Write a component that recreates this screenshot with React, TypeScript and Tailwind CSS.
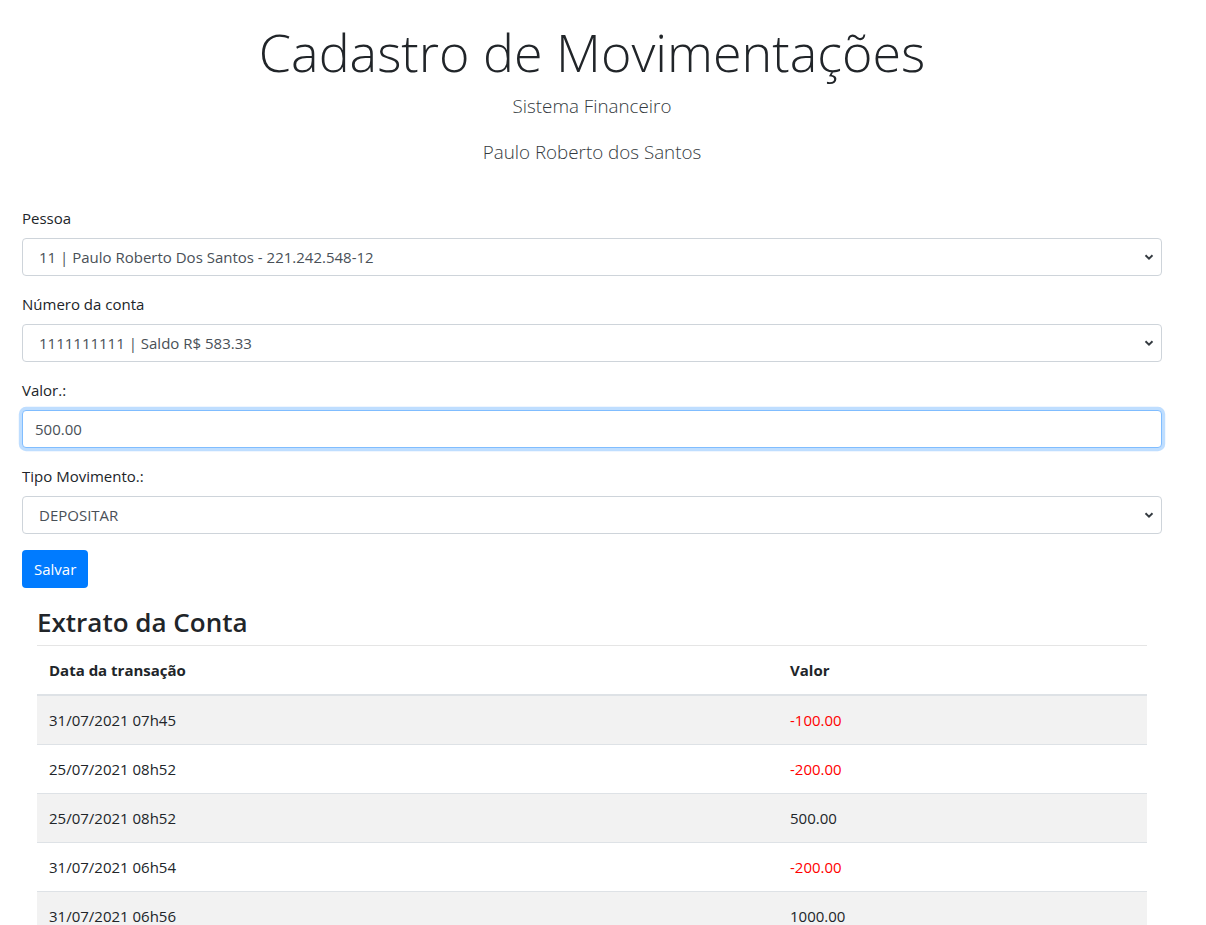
import React from "react";

const font = { fontFamily: '"Segoe UI", "Open Sans", "Noto Sans", sans-serif' };

const rows = [
  { date: "31/07/2021 07h45", value: "-100.00" },
  { date: "25/07/2021 08h52", value: "-200.00" },
  { date: "25/07/2021 08h52", value: "500.00" },
  { date: "31/07/2021 06h54", value: "-200.00" },
  { date: "31/07/2021 06h56", value: "1000.00" },
];

function Chevron() {
  return (
    <svg
      className="pointer-events-none absolute right-[8px] top-1/2 -translate-y-1/2"
      width="10"
      height="8"
      viewBox="0 0 10 8"
    >
      <path d="M1.5 2.2 L5 5.6 L8.5 2.2" stroke="#343a40" strokeWidth="1.9" fill="none" />
    </svg>
  );
}

function SelectField({ label, value }: { label: string; value: string }) {
  return (
    <div className="mb-4">
      <label className="mb-2 block text-[15px] leading-6 text-[#212529]">{label}</label>
      <div className="relative">
        <select
          defaultValue={value}
          className="h-[38px] w-full appearance-none rounded-[4px] border border-[#ced4da] bg-white pl-[16px] pr-7 text-[15px] text-[#495057] outline-none"
          style={font}
        >
          <option>{value}</option>
        </select>
        <Chevron />
      </div>
    </div>
  );
}

export default function App() {
  return (
    <div className="min-h-screen bg-white text-[#212529]" style={font}>
      <div className="ml-[22px] w-[1140px] pb-10">
        {/* Header */}
        <div className="pt-[18px] text-center">
          <h1 className="text-[52px] font-light leading-[67px] text-[#212529]">
            Cadastro de Movimentações
          </h1>
          <p className="mt-[6px] text-[18.8px] font-light leading-[30px] text-[#343a40]">Sistema Financeiro</p>
          <p className="mt-[16px] text-[18.8px] font-light leading-[30px] text-[#343a40]">Paulo Roberto dos Santos</p>
        </div>

        {/* Form */}
        <form className="mt-[39px]" onSubmit={(e) => e.preventDefault()}>
          <SelectField label="Pessoa" value="11 | Paulo Roberto Dos Santos - 221.242.548-12" />
          <SelectField label="Número da conta" value="1111111111 | Saldo R$ 583.33" />
          <div className="mb-4">
            <label className="mb-2 block text-[15px] leading-6">Valor.:</label>
            <input
              defaultValue="500.00"
              className="h-[38px] w-full rounded-[4px] border border-[#80bdff] bg-white px-3 text-[15px] text-[#495057] shadow-[0_0_0_3.2px_rgba(0,123,255,0.25)] outline-none"
              style={font}
            />
          </div>
          <SelectField label="Tipo Movimento.:" value="DEPOSITAR" />
          <div className="flex">
            <button
              type="submit"
              className="block h-[38px] rounded-[4px] bg-[#007bff] px-3 text-[15px] leading-6 text-white"
              style={font}
            >
              Salvar
            </button>
          </div>
        </form>

        {/* Extrato */}
        <div className="px-[15px]">
          <h3 className="mt-[17px] text-[26px] font-semibold leading-[34px]">Extrato da Conta</h3>
          <hr className="mt-[6px] border-t border-[rgba(0,0,0,0.1)]" />
          <table className="w-full border-collapse text-[15px]">
            <thead>
              <tr className="border-b-2 border-[#dee2e6]">
                <th className="w-[741px] px-3 py-3 text-left font-bold leading-6">Data da transação</th>
                <th className="px-3 py-3 text-left font-bold leading-6">Valor</th>
              </tr>
            </thead>
            <tbody>
              {rows.map((r, i) => (
                <tr key={i} className={`border-t border-[#dee2e6] ${i % 2 === 0 ? "bg-[#f2f2f2]" : "bg-white"}`}>
                  <td className="px-3 py-3 leading-6">{r.date}</td>
                  <td className={`px-3 py-3 leading-6 ${r.value.startsWith("-") ? "text-[#ff0000]" : ""}`}>
                    {r.value}
                  </td>
                </tr>
              ))}
            </tbody>
          </table>
        </div>
      </div>
    </div>
  );
}
